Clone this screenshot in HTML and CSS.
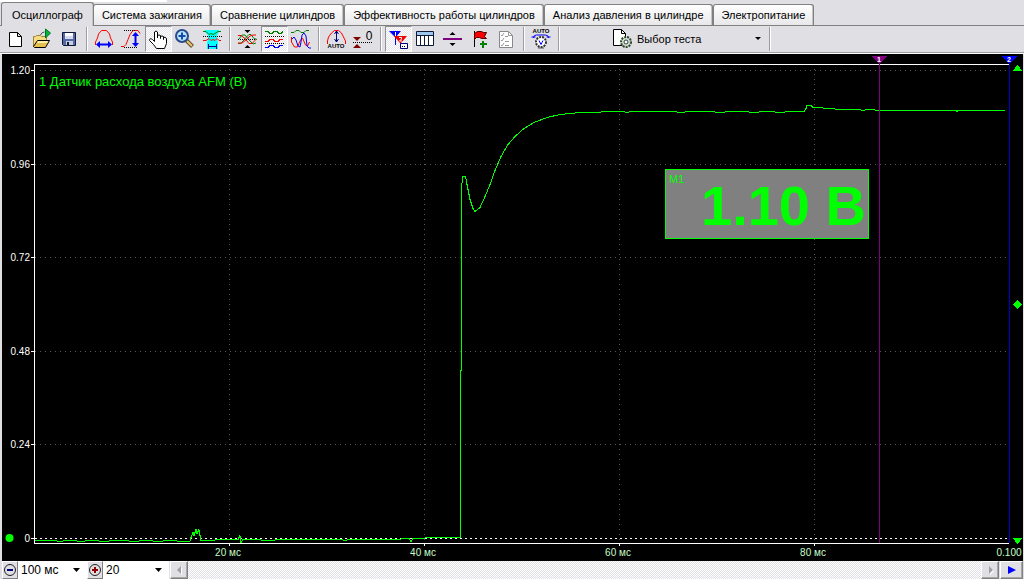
FILE: index.html
```html
<!DOCTYPE html>
<html lang="ru">
<head>
<meta charset="utf-8">
<title>Осциллограф</title>
<link rel="stylesheet" href="styles.css">
</head>
<body>
<div class="app">
  <div class="strip"></div>
  <nav class="tabs" role="tablist">
    <button class="tab active" role="tab" aria-selected="true">Осциллограф</button>
    <button class="tab" role="tab">Система зажигания</button>
    <button class="tab" role="tab">Сравнение цилиндров</button>
    <button class="tab" role="tab">Эффективность работы цилиндров</button>
    <button class="tab" role="tab">Анализ давления в цилиндре</button>
    <button class="tab" role="tab">Электропитание</button>
  </nav>
  <div class="toolbar" role="toolbar">
    <button class="tool" aria-label="Новый"><svg class="icon" viewBox="0 0 26 26"><path d="M7.500 6.500h8l4 4v10h-12zM15.500 6.500v4h4" fill="#fff" stroke="#000"/></svg></button>
    <button class="tool" aria-label="Открыть"><svg class="icon" viewBox="0 0 26 26"><path d="M4.500 20.500v-10h2l1-1h4l1 1h5v4" fill="#f5dc84" stroke="#a08430"/><path d="M4.500 20.500l4-6h12l-4 7h-11z" fill="#e5bf50" stroke="#000"/><path d="M9 15h10l-1 2H8z" fill="#fff0a0"/><path d="M11.500 9q1-3 4-3" fill="none" stroke="#555"/><path d="M16.500 3v9l5-5z" fill="#00b83c" stroke="#007020"/></svg></button>
    <button class="tool" aria-label="Сохранить"><svg class="icon" viewBox="0 0 26 26"><path d="M6.500 6.500h13v13h-12l-1-1z" fill="#5268a8" stroke="#101838"/><path d="M9 7h8v6H9z" fill="#fff"/><path d="M9 10h8v3H9z" fill="#d4dcec"/><path d="M10 15h7v4h-7z" fill="#c8d0e0"/><path d="M11 16h2v3h-2z" fill="#101838"/></svg></button>
    <span class="sep"></span>
    <button class="tool" aria-label="Масштаб по горизонтали"><svg class="icon" viewBox="0 0 26 26"><path d="M4.500 19v-3l2-4 1-4 3-3.500h5l3 3.500 1 4 2 4v3" fill="none" stroke="red"/><path d="M5 18.500l4-3.500v2.500h8V15l4 3.500-4 3.500v-2.500H9V22z" fill="#0000f8"/></svg></button>
    <button class="tool" aria-label="Масштаб по вертикали"><svg class="icon" viewBox="0 0 26 26"><path d="M3 20.500h3l2-2 2-5 2-5 3-4h5l2 3" fill="none" stroke="red"/><path d="M6 4.500h12M6 21.500h14" stroke="#000" stroke-dasharray="1 1"/><path d="M17.500 6l3.500 4h-2.500v7H21l-3.500 4-3.500-4h2.500v-7H14z" fill="#0000f8"/></svg></button>
    <button class="tool pressed" aria-label="Рука" aria-pressed="true"><svg class="icon" viewBox="0 0 26 26"><path d="M9.500 15.500V6q1.500-2 3 0v6V9.500q1.500-1 3 0v3V10.500q1.500-1 3 0v3V11.500q1.500-1 3 1v5l-2 5h-8l-3-4-4-4q0-3 3-1z" fill="#fff" stroke="#000"/></svg></button>
    <button class="tool" aria-label="Увеличить"><svg class="icon" viewBox="0 0 26 26"><path d="M14.500 14.500l6 6" stroke="#604c20" stroke-width="4"/><path d="M15 15l5 5" stroke="#e8c47c" stroke-width="2"/><circle cx="10" cy="10" r="6" fill="#b8e4fa" stroke="#284a88" stroke-width="2"/><path d="M10 6.500v7M6.500 10h7" stroke="#164aaa" stroke-width="2"/></svg></button>
    <button class="tool" aria-label="Интервал"><svg class="icon" viewBox="0 0 26 26"><path d="M6 4h14v2l-2 3v4l1 3v7H8v-7l1-3V9L6 6z" fill="#00ffff"/><path d="M4 5.500h3l3 3 2-1 2 1 2-1 3-2h3" fill="none" stroke="#008000"/><path d="M4 10.500h19" stroke="#000" stroke-dasharray="1 1"/><path d="M4 14.500h3l3-2 2 2 2-1 2 1 2-2 2 2h2" fill="none" stroke="red"/><path d="M9 20.500h8M9.500 18v5M17.500 18v5" stroke="#0000a0"/></svg></button>
    <span class="sep"></span>
    <button class="tool" aria-label="Совместить"><svg class="icon" viewBox="0 0 26 26"><path d="M4 17.500h3l5-6 3-3h2l3 4 3 1" fill="none" stroke="#008000"/><path d="M4 9.500h3l4 3 4 5h3l4-4" fill="none" stroke="red"/><path d="M5 13l3-4h3l5 6 3 3 3-1" fill="none" stroke="#008000"/><path d="M4 17l4 0 4-3 4-4 3-1h3" fill="none" stroke="red"/><path d="M4 13.500h18" stroke="#000" stroke-dasharray="1 1"/><path d="M10.500 4h6l-3 3zM10.500 22h6l-3-3z"/></svg></button>
    <button class="tool pressed" aria-label="Разделить" aria-pressed="true"><svg class="icon" viewBox="0 0 26 26" shape-rendering="crispEdges"><path d="M4 5.500h3l2 2h2l2-2h3l2 2h2l2-2" fill="none" stroke="#008000"/><path d="M4 15.500h3l2-2h3l2 2h3l2-2h3" fill="none" stroke="red"/><path d="M4 21.500h3l2-2h3l2 2h3l2-2h3" fill="none" stroke="#0000f8"/><path d="M4 10.500h19M4 17.500h19" stroke="#000" stroke-dasharray="1 1"/></svg></button>
    <button class="tool" aria-label="Наложить"><svg class="icon" viewBox="0 0 26 26"><path d="M3 6.500h3l2-2h3l2 2h3l2-2h3" fill="none" stroke="#008000"/><path d="M3.500 11v5l3 5h3l3-7 2-2 3 7 2 1 2-4" fill="none" stroke="red"/><path d="M4 13l2-2 2 3 2 6 2 1 1-5 1-7 2-2 2 3 1 10 2 2h2" fill="none" stroke="#0000f8"/></svg></button>
    <span class="sep"></span>
    <button class="tool" aria-label="Автомасштаб"><svg class="icon" viewBox="0 0 26 26"><path d="M4.500 18v-3l1-4 3-4 3-2.500h4l3 2.500 2 4 2 4v3" fill="none" stroke="red"/><path d="M13.500 5v11M11.500 8l2-3 2 3M11.500 13l2 3 2-3" fill="none" stroke="#000080"/><text class="tiny" x="13" y="22">AUTO</text></svg></button>
    <button class="tool" aria-label="Сброс нуля"><svg class="icon" viewBox="0 0 26 26"><path d="M3 11h8l-4 4zM3 22h8l-4-4z" fill="#800000"/><path d="M3 16.500h19" stroke="#000" stroke-dasharray="1 1"/><text class="zero" x="19" y="14">0</text></svg></button>
    <span class="sep"></span>
    <button class="tool pressed" aria-label="Маркеры" aria-pressed="true"><svg class="icon" viewBox="0 0 26 26"><path d="M4 5h12l-5 6v8h-1v-8z" fill="#0000f8"/><path d="M9 10h13l-6 7v5h-1v-5z" fill="#f00000"/><path d="M10.500 6v4" stroke="#fff"/><path d="M14 11.500h2.500v1.500l-2 2H17" fill="none" stroke="#fff"/><path d="M15.500 17.500h7v5h-7z" fill="#fff" stroke="#000080"/><path d="M17 20.500h4" stroke="#000" stroke-dasharray="1 1"/></svg></button>
    <button class="tool" aria-label="Таблица"><svg class="icon" viewBox="0 0 26 26"><path d="M4.500 5.500h17v14h-17z" fill="#fff" stroke="#101838"/><path d="M5 6h16v3H5z" fill="#9cc8f0"/><path d="M4 9.500h17M8.500 9v10M12.500 9v10M16.500 9v10" stroke="#101838"/></svg></button>
    <button class="tool" aria-label="Разделитель"><svg class="icon" viewBox="0 0 26 26"><path d="M4 12h19v2H4z" fill="#800080"/><path d="M10.500 9h6l-3-3zM10.500 17h6l-3 3z"/></svg></button>
    <button class="tool" aria-label="Добавить метку"><svg class="icon" viewBox="0 0 26 26"><path d="M8.500 5v16" stroke="#000"/><path d="M8.500 7.500l3-2h4l2 1h3l-2 4 2 2h-5l-2-1h-3l-2 2z" fill="#f80000" stroke="#500000"/><path d="M14 17h2v-2h2v2h3v2h-3v3h-2v-3h-2z" fill="#008000"/></svg></button>
    <button class="tool" aria-label="Список"><svg class="icon" viewBox="0 0 26 26"><path d="M6.500 5.500h9l4 4v12h-13z" fill="#fff" stroke="#888"/><path d="M15.500 5.500v4h4M8 9l1 1 2-3M8 14l1 1 2-3M8 19l1 1 2-3M12 10.500h3M12 15.500h4M12 19.500h4" fill="none" stroke="#999"/></svg></button>
    <span class="sep"></span>
    <button class="tool" aria-label="Автоматический запуск"><svg class="icon" viewBox="0 0 26 26"><text class="tiny" x="13" y="7">AUTO</text><path d="M5.500 12q0-3 3-3h9q3 0 3 3M3.500 11h4M22.500 11h-4" fill="none" stroke="#0000f8"/><circle cx="13" cy="16" r="5" fill="#fff" stroke="#333" stroke-width="2" stroke-dasharray="2 1"/><path d="M11 14.500l2 4 2-4" fill="none" stroke="#0000f8"/><path d="M10 22h6" stroke="#555"/></svg></button>
    <span class="sep"></span>
    <label class="test"><svg class="icon" viewBox="0 0 22 22"><path d="M2.500 1.500h8l4 4v12h-12z" fill="#fff" stroke="#000"/><path d="M10.500 1.500v4h4" fill="none" stroke="#000"/><circle cx="15" cy="14" r="5" fill="#cfe0cf" stroke="#334433" stroke-width="2" stroke-dasharray="2 1"/><circle cx="15" cy="14" r="2" fill="#fff" stroke="#344"/></svg>
      <select class="flat" aria-label="Выбор теста"><option>Выбор теста</option></select></label>
    <span class="sep"></span>
  </div>
  <main class="scope">
    <svg class="plot" viewBox="2 54 1021 507" shape-rendering="crispEdges">
      <path class="grid" d="M40 70.500H1008M35 164.500H1008M35 257.500H1008M35 351.500H1008M35 444.500H1008M229.500 69V543M424.500 69V543M619.500 69V543M814.500 69V543"/>
      <path class="axis" d="M1009 64.500H34.500V543.500H1009M31 70.500h4M31 164.500h4M31 257.500h4M31 351.500h4M31 444.500h4M31 538.500h4M229.500 543v3M424.500 543v3M619.500 543v3M814.500 543v3"/>
      <path class="base" d="M35 538.500H1008"/>
      <path class="trace" d="M35 540.500H56L58 541.500H62L64 540.500H76L78 541.500H84L86 540.500H98L100 541.500H108L110 540.500H128L130 541.500H138L140 540.500H152L154 541.500H162L164 540.500H176L178 541.500H190L191 537.500 193 532.500 194 535.500 196 529.500 197 533.500 199 529.500 200 535.500 201 540.500H214L216 539.500H238L240 535.500 241 542.500 243 539.500H260L262 540.500H274L276 539.500H342L344 540.500H346L348 539.500H398L404 538.500H409L411 541.500 413 538.500H424L426 537.500H460.500V370.500H461.500V190.500L462.500 176.500H465.500L467 184.500 470 199.500 473 208.500 475 211.500 480 207.500 485 196.500 490 184.500 495 170.500 501 156.500 508 144.500 515 136.500 524 128.500 534 122.500 547 117.500 560 114.500 580 112.500 600 112.500 602 111.500H624L626 112.500H628L630 111.500H676L678 112.500H684L686 111.500H714L716 112.500H724L726 111.500H748L750 112.500H758L760 111.500H774L776 112.500H784L786 111.500H804L806 108.500 807 105.500H811L813 107.500H822L824 108.500H834L836 109.500H860L862 110.500H864L866 109.500H874L876 110.500H956L957 111.500 958 110.500H1005"/>
      <path d="M879.500 64V543" stroke="#800080"/><path d="M1009.500 64V543" stroke="#0000c8"/>
      <path d="M872 56h15l-7 8h-1z" fill="#800080"/><path d="M1002 56h15l-7 8h-1z" fill="#0000ff"/>
      <text class="mark" x="879" y="62">1</text><text class="mark" x="1009" y="62">2</text>
      <path class="green" d="M1013 71h9l-4-6h-1zM1013 538h9l-4 6h-1zM1013 304.500l4.500-4.500 4.500 4.500-4.500 4.500z"/>
      <circle class="green" cx="9.500" cy="538" r="4" shape-rendering="auto"/>
      <g class="ylabel"><text x="30" y="74">1.20</text><text x="30" y="168">0.96</text><text x="30" y="261">0.72</text><text x="30" y="355">0.48</text><text x="30" y="448">0.24</text><text x="30" y="542">0</text></g>
      <g class="xlabel"><text x="228" y="556">20 мс</text><text x="423" y="556">40 мс</text><text x="618" y="556">60 мс</text><text x="813" y="556">80 мс</text><text x="1009" y="556">0.100</text></g>
      <text class="title" x="39" y="86">1 Датчик расхода воздуха AFM (В)</text>
      <rect x="665.500" y="169.500" width="203" height="69" fill="#808080" stroke="#00ff00"/>
      <text class="meter" x="669" y="183">M1</text>
      <text class="reading" x="866" y="225">1.10 В</text>
    </svg>
  </main>
  <footer class="footer">
    <button class="step" aria-label="Меньше"><svg class="knob" viewBox="0 0 14 14"><circle cx="7" cy="7" r="5.500" fill="none" stroke="#222"/><path d="M4 7h6" stroke="#000080" stroke-width="2"/></svg></button>
    <select class="combo" aria-label="Развёртка"><option>100 мс</option></select>
    <button class="step" aria-label="Больше"><svg class="knob" viewBox="0 0 14 14"><circle cx="7" cy="7" r="5.500" fill="none" stroke="#222"/><path d="M4 7h6M7 4v6" stroke="#900000" stroke-width="2"/></svg></button>
    <select class="combo gain" aria-label="Усиление"><option>20</option></select>
    <div class="scroll">
      <button class="arrow" aria-label="Назад"><svg class="knob" viewBox="0 0 14 14"><path d="M10 4v8l-4-4z" fill="#fff"/><path d="M9 3v8L5 7z" fill="#a0a0a0"/></svg></button>
      <span class="track"></span>
      <button class="arrow" aria-label="Вперёд"><svg class="knob" viewBox="0 0 14 14"><path d="M7 4v8l4-4z" fill="#fff"/><path d="M6 3v8l4-4z" fill="#a0a0a0"/></svg></button>
    </div>
    <button class="arrow play" aria-label="Пуск"><svg class="knob" viewBox="0 0 14 14"><path d="M3 3v8l8-4z" fill="#0000ff"/></svg></button>
  </footer>
</div>
</body>
</html>
```
FILE: styles.css
```css
* { box-sizing: border-box; }
body { margin: 0; background: #e0dfe3; font: 11px/14px "Liberation Sans", sans-serif; color: #000; }
button, select { font: inherit; color: inherit; margin: 0; }
svg { display: block; }
.app { display: flex; flex-direction: column; min-height: 100vh; }
.strip { height: 2px; width: 167px; background: #fff; }
.tabs { display: flex; align-items: flex-end; gap: 0; height: 24px; padding-left: 1px; border-bottom: 1px solid #808080; }
.tab { height: 21px; padding: 0 8px; white-space: nowrap; border: 1px solid #808080; border-bottom: 0; border-radius: 3px 3px 0 0; background: linear-gradient(#fff, #e8e8ea); box-shadow: inset -1px 0 #c4c4c8; }
.tab.active { height: 24px; margin: 0 -1px -1px 0; background: #e0dfe3; padding: 0 10px; }
.toolbar { display: flex; align-items: center; height: 28px; padding: 0 2px 2px; border-bottom: 1px solid #fff; box-shadow: inset 0 -1px #a0a0a4; }
.tool { flex: none; width: 27px; height: 26px; padding: 0; border: 0; background: none; }
.tool.pressed { border: 1px solid #fff; border-top-color: #909098; border-left-color: #909098; background: repeating-conic-gradient(#fff 0 25%, #e4e3e7 0 50%) 0 0 / 2px 2px; }
.icon { width: 26px; height: 26px; }
.pressed .icon { margin: -1px; }
.tiny { font: bold 6px "Liberation Sans", sans-serif; text-anchor: middle; }
.zero { font: 12px "Liberation Sans", sans-serif; text-anchor: middle; }
.sep { flex: none; width: 2px; height: 24px; margin: 0 3px; border-left: 1px solid #9c9ca2; border-right: 1px solid #fff; }
.test { display: flex; align-items: center; width: 203px; padding-left: 48px; }
.test .icon { width: 22px; height: 22px; }
.flat, .combo { appearance: none; border: 0; border-radius: 0; background: url("data:image/svg+xml,%3Csvg xmlns='http://www.w3.org/2000/svg' width='7' height='4'%3E%3Cpath d='M0 0h7L3.500 4z'/%3E%3C/svg%3E") no-repeat right 5px center; }
.flat { flex: 1; height: 20px; padding: 0 4px; background-size: 6px 3px; }
.scope { flex: 1; display: flex; margin: 0 1px 0 2px; background: #000; }
.plot { width: 100%; height: auto; font: 10px "Liberation Sans", sans-serif; }
.grid { fill: none; stroke: #585858; stroke-dasharray: 1 4; }
.axis { fill: none; stroke: #fff; }
.base { stroke: #fff; stroke-dasharray: 2 3; }
.trace { fill: none; stroke: #00ff00; }
.green, .title, .meter, .reading { fill: #00ff00; }
.ylabel { fill: #fff; text-anchor: end; }
.xlabel { fill: #c8ffc8; text-anchor: middle; }
.mark { fill: #fff; font-size: 7px; font-weight: bold; text-anchor: middle; }
.title { font-size: 13px; }
.meter { font-size: 11px; }
.reading { font-size: 56px; font-weight: bold; text-anchor: end; }
.footer { display: flex; height: 18px; padding: 0 1px 0 2px; }
.step, .arrow { display: flex; flex: none; align-items: center; justify-content: center; width: 16px; height: 18px; padding: 0; border: 1px solid #808080; border-top-color: #fff; border-left-color: #fff; background: #e0dfe3; }
.knob { width: 14px; height: 14px; }
.combo { width: 69px; padding: 0 3px; background-color: #fff; font-size: 12px; background-position: right 7px center; }
.gain { width: 66px; }
.scroll { display: flex; flex: 1; margin-left: 1px; }
.track { flex: 1; background: repeating-conic-gradient(#fff 0 25%, #e0dfe3 0 50%) 0 0 / 2px 2px; }
.arrow { width: 18px; box-shadow: inset -1px -1px #a8a8a8; }
.play { width: 23px; margin-left: 1px; }
```
